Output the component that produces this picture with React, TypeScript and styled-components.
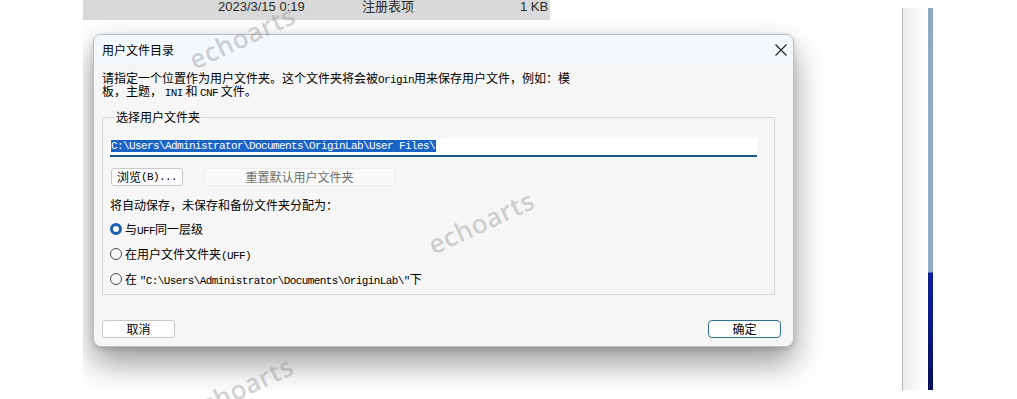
import React from "react";
import styled, { createGlobalStyle } from "styled-components";

const Global = createGlobalStyle`
  html, body { margin: 0; padding: 0; background: #ffffff; }
  body { font-family: "Noto Sans CJK SC", "Liberation Sans", sans-serif; }
  * { box-sizing: border-box; }
`;

const Stage = styled.div`
  position: relative;
  width: 1017px;
  height: 399px;
  overflow: hidden;
  display: flex;
  background: #ffffff;
`;

const BackWindow = styled.div`
  margin-left: 83px;
  width: 819px;
  height: 390px;
  overflow: hidden;
  background: #ffffff;
  display: flex;
  flex-direction: column;
`;

const FileRow = styled.div`
  width: 467px;
  height: 20px;
  background: #d9d9d9;
  overflow: hidden;
  position: relative;
  font-family: "Liberation Sans", "Noto Sans CJK SC", sans-serif;
  font-size: 13px;
  color: #2a2a2a;
  line-height: 18px;
`;

const FileCell = styled.span<{ $left: number }>`
  position: absolute;
  left: ${(p) => p.$left}px;
  top: -2px;
  white-space: nowrap;
`;

const DialogSlot = styled.div`
  padding: 14px 0 0 10px;
`;

const Dialog = styled.div`
  width: 701px;
  height: 313px;
  border: 1px solid #bdbdbd;
  border-radius: 8px;
  background: #f6f6f6;
  box-shadow: 0 16px 32px rgba(0, 0, 0, 0.4), 0 2px 6px rgba(0, 0, 0, 0.15);
  display: flex;
  flex-direction: column;
  overflow: hidden;
`;

const TitleBar = styled.div`
  height: 29px;
  flex: none;
  background: #f3f8fc;
  display: flex;
  align-items: center;
  justify-content: space-between;
  padding: 0 5px 0 8px;
  font-size: 12px;
  color: #000;
`;

const CloseBtn = styled.div`
  width: 14px;
  height: 14px;
  display: flex;
  align-items: center;
  justify-content: center;
  margin-top: 1px;
`;

const Body = styled.div`
  flex: 1;
  display: flex;
  flex-direction: column;
  padding: 7px 0 0 8px;
`;

const Latin = styled.span`
  font-family: "Liberation Mono", monospace;
  font-size: 11px;
  letter-spacing: -0.6px;
  line-height: 0;
`;

const Desc = styled.div`
  font-size: 12px;
  line-height: 13px;
  color: #000;
  white-space: nowrap;
`;

const Group = styled.fieldset`
  width: 673px;
  margin: 13px 0 0 0;
  padding: 14px 17px 3px 7px;
  border: 1px solid #d8d8d8;
  border-radius: 1px;
  min-width: 0;
`;

const Legend = styled.legend`
  font-size: 12px;
  line-height: 14px;
  padding: 0 1px;
  margin-left: 5px;
  color: #000;
`;

const PathInput = styled.div`
  height: 19px;
  background: #ffffff;
  border-bottom: 2px solid #1d5a86;
  padding: 2px 0 0 1px;
  display: flex;
  align-items: flex-start;
`;

const Selected = styled.span`
  background: #1a63c6;
  color: #ffffff;
  font-family: "Liberation Mono", monospace;
  font-size: 11px;
  letter-spacing: -0.6px;
  line-height: 12px;
  height: 12px;
  padding-right: 0.6px;
  white-space: nowrap;
`;

const ButtonRow = styled.div`
  display: flex;
  gap: 21px;
  margin-top: 11px;
  padding-left: 1px;
`;

const Btn = styled.button<{ $w: number; $disabled?: boolean; $default?: boolean }>`
  width: ${(p) => p.$w}px;
  height: 18px;
  flex: none;
  padding: 0;
  margin: 0;
  font-family: "Noto Sans CJK SC", sans-serif;
  font-size: 12px;
  line-height: 16px;
  color: ${(p) => (p.$disabled ? "#6e6e6e" : "#000")};
  background: ${(p) => (p.$disabled ? "#fafafa" : "#ffffff")};
  border: 1px solid
    ${(p) => (p.$default ? "#2f6d8e" : p.$disabled ? "#ececec" : "#c9c9c9")};
  border-radius: ${(p) => (p.$default ? 4 : 3)}px;
  display: flex;
  align-items: center;
  justify-content: center;
  cursor: default;
`;

const AssignLabel = styled.div`
  margin-top: 11px;
  font-size: 12px;
  line-height: 16px;
  color: #000;
`;

const RadioList = styled.div`
  margin-top: 3px;
  display: flex;
  flex-direction: column;
`;

const RadioRow = styled.div`
  height: 25px;
  display: flex;
  align-items: center;
  gap: 3px;
  font-size: 12px;
  color: #000;
  white-space: nowrap;
`;

const RadioDot = styled.span<{ $on?: boolean }>`
  width: 12px;
  height: 12px;
  border-radius: 50%;
  flex: none;
  background: ${(p) => (p.$on ? "#ffffff" : "transparent")};
  border: ${(p) => (p.$on ? "3.5px solid #1a5fb0" : "1px solid #505050")};
`;

const Footer = styled.div`
  display: flex;
  justify-content: space-between;
  width: 679px;
  margin-top: 25px;
`;

const RightPane = styled.div`
  margin-top: 8px;
  height: 382px;
  display: flex;
`;

const Divider = styled.div`
  width: 26px;
  border-left: 1px solid #b4b4b4;
  background: linear-gradient(to right, #ececec, #fbfbfb 70%, #ffffff);
`;

const ColorBar = styled.div`
  width: 5px;
  background: linear-gradient(
    to bottom,
    #8eaac4 0%,
    #93adc6 69%,
    #0e2196 69.5%,
    #0b1a86 82%,
    #090f55 100%
  );
`;

const Watermark = styled.span<{ $x: number; $y: number }>`
  position: absolute;
  left: ${(p) => p.$x}px;
  top: ${(p) => p.$y}px;
  transform: translate(-50%, -50%) rotate(-25deg);
  font-family: "Open Sans", "Liberation Sans", sans-serif;
  font-weight: 600;
  font-size: 26px;
  letter-spacing: 0.5px;
  color: rgba(140, 140, 140, 0.38);
  pointer-events: none;
  white-space: nowrap;
`;

export default function App() {
  return (
    <>
      <Global />
      <Stage>
        <BackWindow>
          <FileRow>
            <FileCell $left={135}>2023/3/15 0:19</FileCell>
            <FileCell $left={279}>注册表项</FileCell>
            <FileCell $left={437}>1 KB</FileCell>
          </FileRow>
          <DialogSlot>
            <Dialog>
              <TitleBar>
                <span>用户文件目录</span>
                <CloseBtn>
                  <svg width="12" height="12" viewBox="0 0 12 12">
                    <path d="M0.5 0.5 L11.5 11.5 M11.5 0.5 L0.5 11.5" stroke="#222" strokeWidth="1.1" fill="none" />
                  </svg>
                </CloseBtn>
              </TitleBar>
              <Body>
                <Desc>
                  请指定一个位置作为用户文件夹。这个文件夹将会被<Latin>Origin</Latin>用来保存用户文件，例如：模
                  <br />
                  板，主题， <Latin>INI</Latin> 和 <Latin>CNF</Latin> 文件。
                </Desc>
                <Group>
                  <Legend>选择用户文件夹</Legend>
                  <PathInput>
                    <Selected>C:\Users\Administrator\Documents\OriginLab\User Files\</Selected>
                  </PathInput>
                  <ButtonRow>
                    <Btn $w={72}>
                      浏览<Latin>(B)...</Latin>
                    </Btn>
                    <Btn $w={191} $disabled>
                      重置默认用户文件夹
                    </Btn>
                  </ButtonRow>
                  <AssignLabel>将自动保存，未保存和备份文件夹分配为：</AssignLabel>
                  <RadioList>
                    <RadioRow>
                      <RadioDot $on />
                      <span>
                        与<Latin>UFF</Latin>同一层级
                      </span>
                    </RadioRow>
                    <RadioRow>
                      <RadioDot />
                      <span>
                        在用户文件文件夹<Latin>(UFF)</Latin>
                      </span>
                    </RadioRow>
                    <RadioRow>
                      <RadioDot />
                      <span>
                        在 <Latin>"C:\Users\Administrator\Documents\OriginLab\"</Latin>下
                      </span>
                    </RadioRow>
                  </RadioList>
                </Group>
                <Footer>
                  <Btn $w={73}>取消</Btn>
                  <Btn $w={73} $default>
                    确定
                  </Btn>
                </Footer>
              </Body>
            </Dialog>
          </DialogSlot>
        </BackWindow>
        <RightPane>
          <Divider />
          <ColorBar />
        </RightPane>
        <Watermark $x={242} $y={37}>echoarts</Watermark>
        <Watermark $x={481} $y={222}>echoarts</Watermark>
        <Watermark $x={240} $y={388}>echoarts</Watermark>
      </Stage>
    </>
  );
}
